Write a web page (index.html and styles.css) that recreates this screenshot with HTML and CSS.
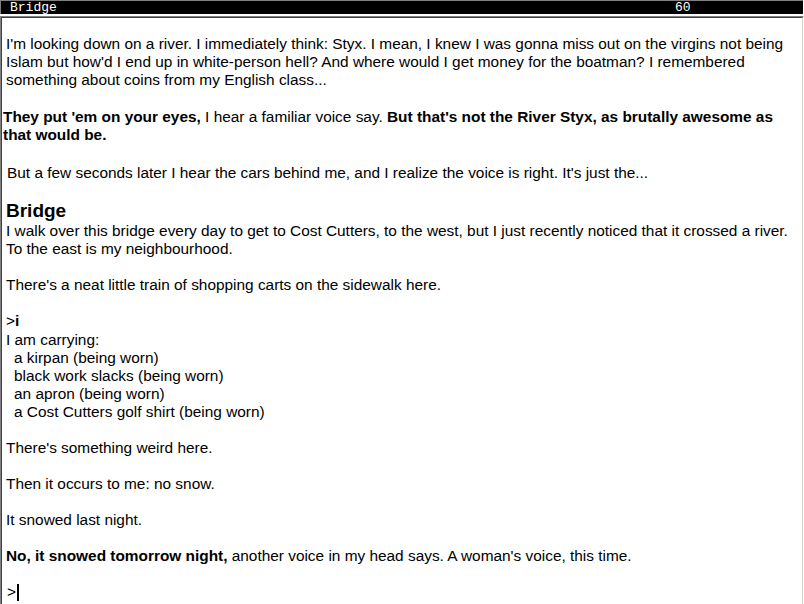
FILE: index.html
```html
<!DOCTYPE html>
<html>
<head>
<meta charset="utf-8">
<title>Bridge</title>
<link rel="stylesheet" href="styles.css">
</head>
<body>
<div class="app">
  <div class="status">
    <span class="loc">Bridge</span>
    <span class="score">60</span>
  </div>
  <div class="window">
    <div class="story">
      <p class="first">I'm looking down on a river. I immediately think: Styx. I mean, I knew I was gonna miss out on the virgins not being Islam but how'd I end up in white-person hell? And where would I get money for the boatman? I remembered something about coins from my English class...</p>
      <p class="flush"><b>They put 'em on your eyes,</b> I hear a familiar voice say. <b>But that's not the River Styx, as brutally awesome as that would be.</b></p>
      <p class="nudge">But a few seconds later I hear the cars behind me, and I realize the voice is right. It's just the...</p>
      <h2 class="room">Bridge</h2>
      <p class="desc">I walk over this bridge every day to get to Cost Cutters, to the west, but I just recently noticed that it crossed a river. To the east is my neighbourhood.</p>
      <p>There's a neat little train of shopping carts on the sidewalk here.</p>
      <p class="cmd">&gt;<b>i</b></p>
      <div class="inv">
        <div>I am carrying:</div>
        <div class="item">a kirpan (being worn)</div>
        <div class="item">black work slacks (being worn)</div>
        <div class="item">an apron (being worn)</div>
        <div class="item">a Cost Cutters golf shirt (being worn)</div>
      </div>
      <p>There's something weird here.</p>
      <p>Then it occurs to me: no snow.</p>
      <p>It snowed last night.</p>
      <p><b>No, it snowed tomorrow night,</b> another voice in my head says. A woman's voice, this time.</p>
      <p class="prompt">&gt;<span class="cursor"></span></p>
    </div>
  </div>
</div>
</body>
</html>
```
FILE: styles.css
```css
html, body {
  margin: 0;
  padding: 0;
  background: #ffffff;
}

.app {
  width: 804px;
  height: 604px;
  display: flex;
  flex-direction: column;
  box-sizing: border-box;
}

.status {
  height: 15px;
  box-sizing: border-box;
  margin-right: 1px;
  background: #000000;
  border-top: 1px solid #808080;
  border-left: 1px solid #808080;
  color: #ffffff;
  font-family: "Liberation Mono", "DejaVu Sans Mono", monospace;
  font-size: 13px;
  line-height: 13px;
  display: flex;
  white-space: pre;
}

.loc {
  padding-left: 9px;
  width: 665px;
}

.window {
  flex: 1;
  margin-top: 2px;
  border-top: 1px solid #808080;
  border-left: 1px solid #808080;
  border-right: 1px solid #ffffff;
  border-bottom: 1px solid #ffffff;
  display: flex;
}

.story {
  flex: 1;
  border-top: 1px solid #404040;
  border-left: 1px solid #404040;
  border-right: 1px solid #d4d0c8;
  border-bottom: 1px solid #d4d0c8;
  padding: 17px 8px 0 4px;
  font-family: "Liberation Sans", Arial, sans-serif;
  font-size: 15.4px;
  line-height: 18px;
  color: #000000;
  overflow: hidden;
}

.story p {
  margin: 0 0 18px 0;
}

.story p.first {
  margin-bottom: 19px;
}

.story p.flush {
  margin-left: -3px;
}

.story p.nudge {
  padding-top: 2px;
  margin-left: 1px;
}

.room {
  margin: 0;
  font-size: 19px;
  line-height: 22px;
  font-weight: bold;
}

.story p.cmd {
  margin-bottom: 1px;
}

.inv {
  margin-bottom: 18px;
}

.item {
  padding-left: 8px;
}

.prompt {
  display: flex;
  align-items: center;
  margin-left: 1px !important;
}

.cursor {
  display: inline-block;
  width: 2px;
  height: 17px;
  margin-left: 1px;
  background: #000000;
}
```
